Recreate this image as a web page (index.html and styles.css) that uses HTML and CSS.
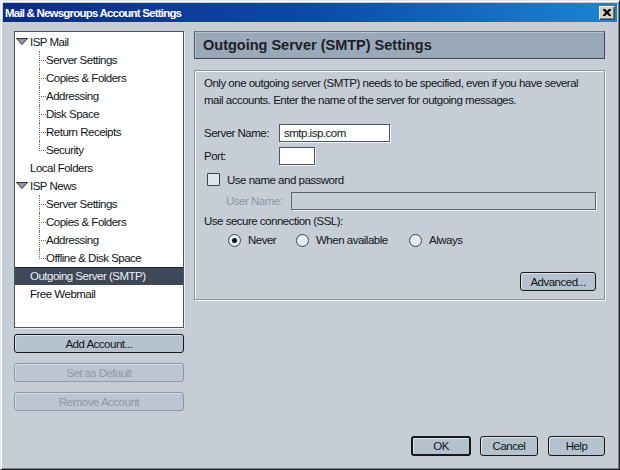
FILE: index.html
```html
<!DOCTYPE html>
<html>
<head>
<meta charset="utf-8">
<link rel="stylesheet" href="styles.css">
</head>
<body>
<div class="window">
  <div class="titlebar">
    <span class="title">Mail &amp; Newsgroups Account Settings</span>
    <span class="close"><svg width="8" height="7" viewBox="0 0 8 7"><path d="M0 0h2l2 2 2-2h2v1l-2.5 2.5L8 6v1H6L4 5 2 7H0V6l2.5-2.5L0 1z" fill="#000"/></svg></span>
  </div>
  <div class="main">
    <div class="leftcol">
      <ul class="tree">
        <li class="row top"><svg class="twisty" width="12" height="7" viewBox="0 0 12 7"><path d="M0.5 0.5h11L6 6.5z" fill="#8c96a4" stroke="#2c3440"/></svg>ISP Mail</li>
        <li class="kids">
          <ul>
            <li class="row kid">Server Settings</li>
            <li class="row kid">Copies &amp; Folders</li>
            <li class="row kid">Addressing</li>
            <li class="row kid">Disk Space</li>
            <li class="row kid">Return Receipts</li>
            <li class="row kid">Security</li>
          </ul>
        </li>
        <li class="row plain">Local Folders</li>
        <li class="row top"><svg class="twisty" width="12" height="7" viewBox="0 0 12 7"><path d="M0.5 0.5h11L6 6.5z" fill="#8c96a4" stroke="#2c3440"/></svg>ISP News</li>
        <li class="kids">
          <ul>
            <li class="row kid">Server Settings</li>
            <li class="row kid">Copies &amp; Folders</li>
            <li class="row kid">Addressing</li>
            <li class="row kid">Offline &amp; Disk Space</li>
          </ul>
        </li>
        <li class="row plain selected">Outgoing Server (SMTP)</li>
        <li class="row plain">Free Webmail</li>
      </ul>
      <div class="btn side first">Add Account...</div>
      <div class="btn side disabled">Set as Default</div>
      <div class="btn side disabled">Remove Account</div>
    </div>
    <div class="rightcol">
      <div class="header">Outgoing Server (SMTP) Settings</div>
      <div class="content">
        <p class="intro">Only one outgoing server (SMTP) needs to be specified, even if you have several mail accounts. Enter the name of the server for outgoing messages.</p>
        <div class="frow server"><span class="lbl">Server Name:</span><span class="field wide">smtp.isp.com</span></div>
        <div class="frow port"><span class="lbl">Port:</span><span class="field short"></span></div>
        <div class="frow check"><span class="checkbox"></span><span>Use name and password</span></div>
        <div class="frow user"><span class="lbl dim">User Name:</span><span class="field off"></span></div>
        <div class="frow ssl">Use secure connection (SSL):</div>
        <div class="frow radios">
          <span class="ritem r1"><span class="radio on"></span>Never</span>
          <span class="ritem r2"><span class="radio"></span>When available</span>
          <span class="ritem r3"><span class="radio"></span>Always</span>
        </div>
        <div class="adv"><span class="btn advbtn">Advanced...</span></div>
      </div>
    </div>
  </div>
  <div class="footer">
    <span class="btn fbtn ok">OK</span>
    <span class="btn fbtn cancel">Cancel</span>
    <span class="btn fbtn help">Help</span>
  </div>
</div>
</body>
</html>
```

FILE: styles.css
```css
* { box-sizing: border-box; }
html, body { margin: 0; padding: 0; background: #c6cdd7; }
body {
  font-family: "Liberation Sans", Arial, sans-serif;
  font-size: 11.5px;
  letter-spacing: -0.5px;
  color: #101418;
}
.window {
  width: 620px;
  height: 470px;
  background: #c6cdd7;
  border-top: 1px solid #e4e8ee;
  border-left: 1px solid #e4e8ee;
  border-right: 1px solid #202020;
  border-bottom: 1px solid #202020;
  box-shadow: inset 1px 1px 0 #ffffff, inset -1px -1px 0 #7c848e;
  padding: 2px;
  display: flex;
  flex-direction: column;
}
.titlebar {
  height: 19px;
  background: linear-gradient(to right, #0b2a8c 0%, #0c49a8 50%, #1a86d2 100%);
  display: flex;
  align-items: center;
  justify-content: space-between;
  padding: 0 2px 0 2px;
}
.title {
  color: #ffffff;
  font-weight: bold;
  font-size: 11.5px;
  letter-spacing: -0.8px;
}
.close {
  width: 16px;
  height: 14px;
  background: #d4d0c8;
  border-top: 1px solid #ffffff;
  border-left: 1px solid #ffffff;
  border-right: 1px solid #404040;
  border-bottom: 1px solid #404040;
  box-shadow: inset -1px -1px 0 #808080;
  display: flex;
  align-items: center;
  justify-content: center;
}
.close svg { display: block; margin-top: -1px; }
.main {
  display: flex;
  padding: 9px 12px 0 11px;
  gap: 10px;
}
.leftcol {
  width: 170px;
  display: flex;
  flex-direction: column;
}
.tree {
  list-style: none;
  margin: 0;
  padding: 1px 0 0 0;
  height: 297px;
  background: #ffffff;
  border: 1px solid #4c5462;
  box-shadow: 1px 1px 0 #eef1f5;
}
.tree ul { list-style: none; margin: 0; padding: 0; }
.row {
  height: 18px;
  line-height: 18px;
  white-space: nowrap;
  position: relative;
}
.top { padding-left: 1px; display: flex; align-items: center; }
.twisty { display: block; margin-right: 2px; margin-top: -1px; }
.plain { padding-left: 15px; }
.kid { padding-left: 31px; }
.kid::before {
  content: "";
  position: absolute;
  left: 24px;
  top: 0;
  height: 9px;
  width: 6px;
  border-left: 1px dotted #707070;
  border-bottom: 1px dotted #707070;
}
.kid::after {
  content: "";
  position: absolute;
  left: 24px;
  top: 9px;
  height: 9px;
  border-left: 1px dotted #707070;
}
.kid:last-child::after { display: none; }
.selected {
  background: #3e4859;
  color: #eef0f4;
  border-top: 1px solid #1c2230;
  line-height: 17px;
}
.btn {
  display: flex;
  align-items: center;
  justify-content: center;
  background: #b6c1ce;
  border: 1px solid #16181c;
  border-radius: 3px;
  box-shadow: inset 1px 1px 0 #dde3ea;
  color: #101418;
}
.side { height: 19px; margin-top: 10px; }
.side.first { margin-top: 6px; }
.btn.disabled {
  border-color: #8e98a8;
  color: #8e98a6;
  background: #bcc5d1;
  box-shadow: inset 1px 1px 0 #d6dce4;
}
.rightcol {
  width: 411px;
  display: flex;
  flex-direction: column;
}
.header {
  height: 28px;
  background: #9aa8b7;
  border: 1px solid #3e4856;
  border-top-color: #6a7684;
  border-left-color: #4e5866;
  box-shadow: inset 1px 1px 0 #b8c3cf;
  padding-left: 8px;
  display: flex;
  align-items: center;
  font-weight: bold;
  font-size: 14.5px;
  letter-spacing: 0;
  color: #1a2028;
}
.content {
  margin-top: 11px;
  height: 230px;
  border: 1px solid #8a94a2;
  box-shadow: inset 1px 1px 0 #f4f6f9, 1px 1px 0 #f4f6f9;
  padding: 4px 8px 8px 9px;
  display: flex;
  flex-direction: column;
}
.intro {
  margin: 0;
  line-height: 17px;
}
.frow { display: flex; align-items: center; white-space: nowrap; }
.lbl { display: inline-block; }
.server { margin-top: 15px; height: 18px; }
.server .lbl { width: 75px; }
.port { margin-top: 5px; height: 18px; }
.port .lbl { width: 75px; }
.field {
  height: 18px;
  background: #ffffff;
  border: 1px solid #4e5664;
  box-shadow: 1px 1px 0 #eef1f5;
  padding-left: 4px;
  line-height: 16px;
}
.field.wide { width: 111px; }
.field.short { width: 36px; }
.check { margin-top: 7px; height: 15px; padding-left: 3px; }
.checkbox {
  width: 13px;
  height: 13px;
  background: #dfe5ec;
  border: 1px solid #3a424e;
  border-radius: 1px;
  margin-right: 7px;
}
.user { margin-top: 5px; height: 18px; padding-left: 22px; }
.user .lbl { width: 65px; }
.dim { color: #8e98a6; }
.field.off {
  flex: 1;
  background: #c6cdd7;
  border-color: #5c6472;
}
.ssl { margin-top: 3px; height: 16px; }
.radios { margin-top: 3px; height: 16px; padding-left: 24px; }
.ritem { display: flex; align-items: center; }
.r1 { width: 68px; }
.r2 { width: 113px; }
.radio {
  width: 13px;
  height: 13px;
  border-radius: 50%;
  border: 1px solid #3a424e;
  background: #e6ebf1;
  margin-right: 7px;
  display: flex;
  align-items: center;
  justify-content: center;
}
.radio.on::after {
  content: "";
  width: 5px;
  height: 5px;
  border-radius: 50%;
  background: #101418;
}
.adv {
  margin-top: auto;
  display: flex;
  justify-content: flex-end;
}
.advbtn { width: 76px; height: 19px; }
.footer {
  margin-top: auto;
  display: flex;
  justify-content: flex-end;
  padding: 0 12px 11px 0;
}
.fbtn { height: 20px; }
.ok { width: 60px; border-width: 2px; margin-right: 9px; }
.cancel { width: 58px; margin-right: 10px; }
.help { width: 57px; }
```
